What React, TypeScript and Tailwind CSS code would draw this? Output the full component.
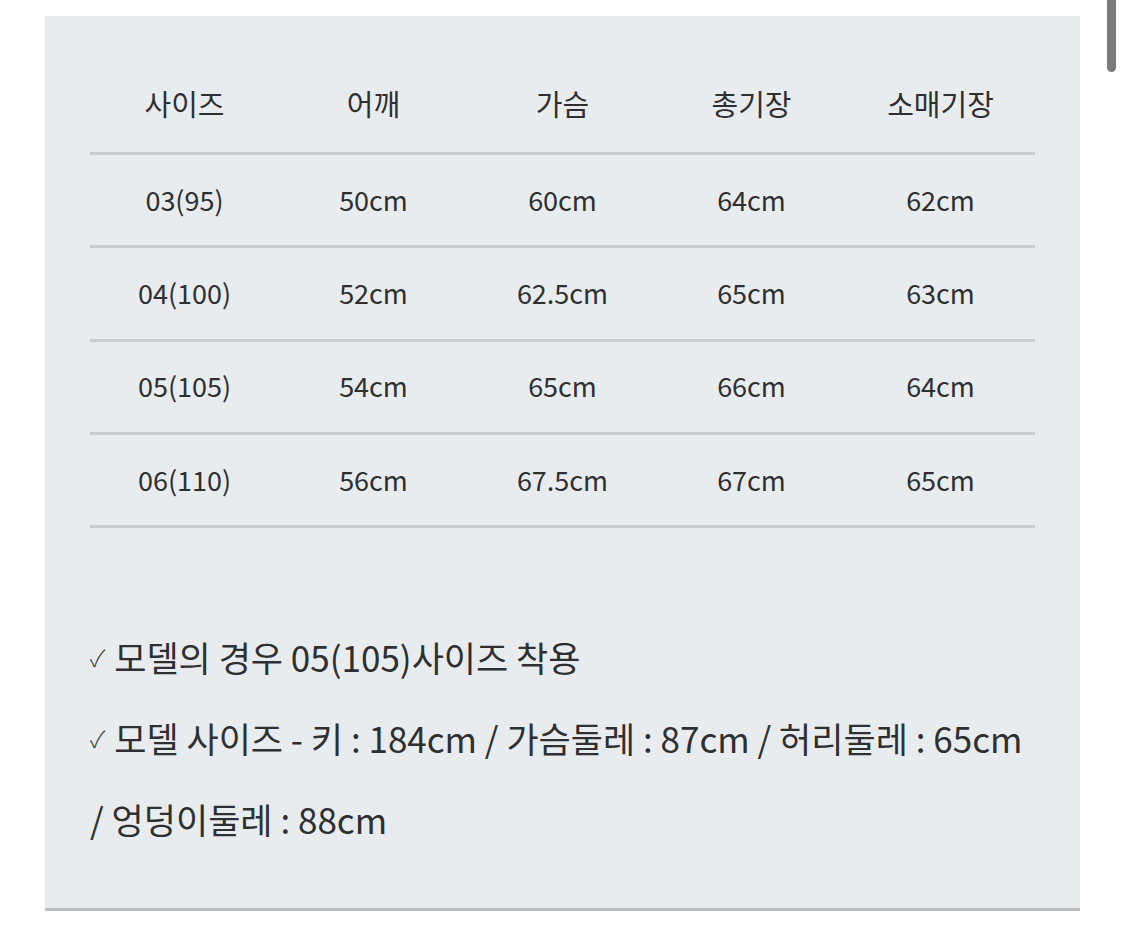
const headers = ['사이즈', '어깨', '가슴', '총기장', '소매기장']

const rows = [
  ['03(95)', '50cm', '60cm', '64cm', '62cm'],
  ['04(100)', '52cm', '62.5cm', '65cm', '63cm'],
  ['05(105)', '54cm', '65cm', '66cm', '64cm'],
  ['06(110)', '56cm', '67.5cm', '67cm', '65cm'],
]

function Check() {
  return <span className="mr-[9px] inline-block text-[23px] font-light leading-none text-[#3a3a3a]">✓</span>
}

export default function App() {
  return (
    <div
      className="relative min-h-[926px] w-[1125px] bg-white pt-[16px] text-[#2e2f31]"
      style={{ fontFamily: '"Noto Sans CJK KR", "Noto Sans", sans-serif' }}
    >
      {/* scrollbar thumb */}
      <div className="absolute right-[9px] top-0 h-[72px] w-[9px] rounded-b-full bg-[#7b7b7b]" />

      <div className="ml-[45px] w-[1035px] border-b-[3px] border-[#b9bcbf] bg-[#e9ecef] px-[45px] pb-[48px] pt-[43px]">
        {/* size table */}
        <div>
          <div className="grid h-[96px] grid-cols-5 items-center border-b-[3px] border-[#c9ccd0] text-center text-[29px]">
            {headers.map((h) => (
              <div key={h} className="-mt-[4px]">{h}</div>
            ))}
          </div>
          {rows.map((r) => (
            <div
              key={r[0]}
              className="grid h-[93.3px] grid-cols-5 items-center border-b-[3px] border-[#c9ccd0] text-center text-[27px]"
            >
              {r.map((c, i) => (
                <div key={i}>{c}</div>
              ))}
            </div>
          ))}
        </div>

        {/* model notes */}
        <div className="mt-[89px] flex flex-col text-[35px]">
          <div className="flex h-[81px] items-center whitespace-nowrap">
            <Check />
            모델의 경우 05(105)사이즈 착용
          </div>
          <div className="flex h-[81px] items-center whitespace-nowrap">
            <Check />
            모델 사이즈 - 키 : 184cm / 가슴둘레 : 87cm / 허리둘레 : 65cm
          </div>
          <div className="flex h-[81px] items-center whitespace-nowrap">/ 엉덩이둘레 : 88cm</div>
        </div>
      </div>
    </div>
  )
}
